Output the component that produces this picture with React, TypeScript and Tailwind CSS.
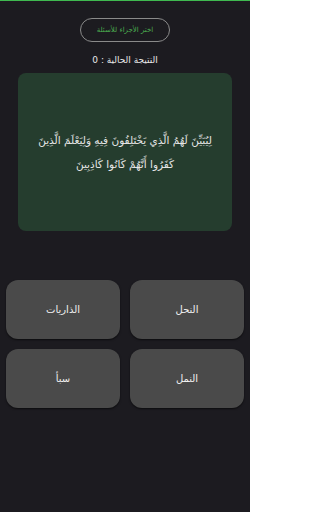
const choices = ["النحل", "الذاريات", "النمل", "سبأ"];

export default function App() {
  return (
    <div
      dir="rtl"
      className="flex h-[512px] w-[250px] flex-col items-center border-t border-[#3fb950] bg-[#1c1b20] text-white"
      style={{ fontFamily: '"DejaVu Sans", "Noto Sans", sans-serif' }}
    >
      <button className="mt-[17px] flex h-[24px] w-[90px] items-center justify-center rounded-full border border-[#8a8a8a] text-[7px] text-[#4caf50]">
        اختر الأجزاء للأسئلة
      </button>
      <p className="mt-[11px] text-[9px] leading-[14px] text-[#e8e8e8]">النتيجة الحالية : 0</p>
      <div className="mt-[6px] flex h-[158px] w-[214px] items-center justify-center rounded-[8px] bg-[#253d2e] px-[14px]">
        <p className="text-center text-[10.5px] leading-[24px] text-[#e6e6e6]">
          لِيُبَيِّنَ لَهُمُ الَّذِي يَخْتَلِفُونَ فِيهِ وَلِيَعْلَمَ الَّذِينَ كَفَرُوا أَنَّهُمْ كَانُوا كَاذِبِينَ
        </p>
      </div>
      <div className="mt-[49px] grid w-[238px] grid-cols-2 gap-[10px]">
        {choices.map((c) => (
          <button
            key={c}
            className="flex h-[59px] items-center justify-center rounded-[12px] bg-[#4a4a4a] text-[10px] text-[#f0f0f0] shadow-[0_1px_2px_rgba(0,0,0,0.6)]"
          >
            {c}
          </button>
        ))}
      </div>
    </div>
  );
}
